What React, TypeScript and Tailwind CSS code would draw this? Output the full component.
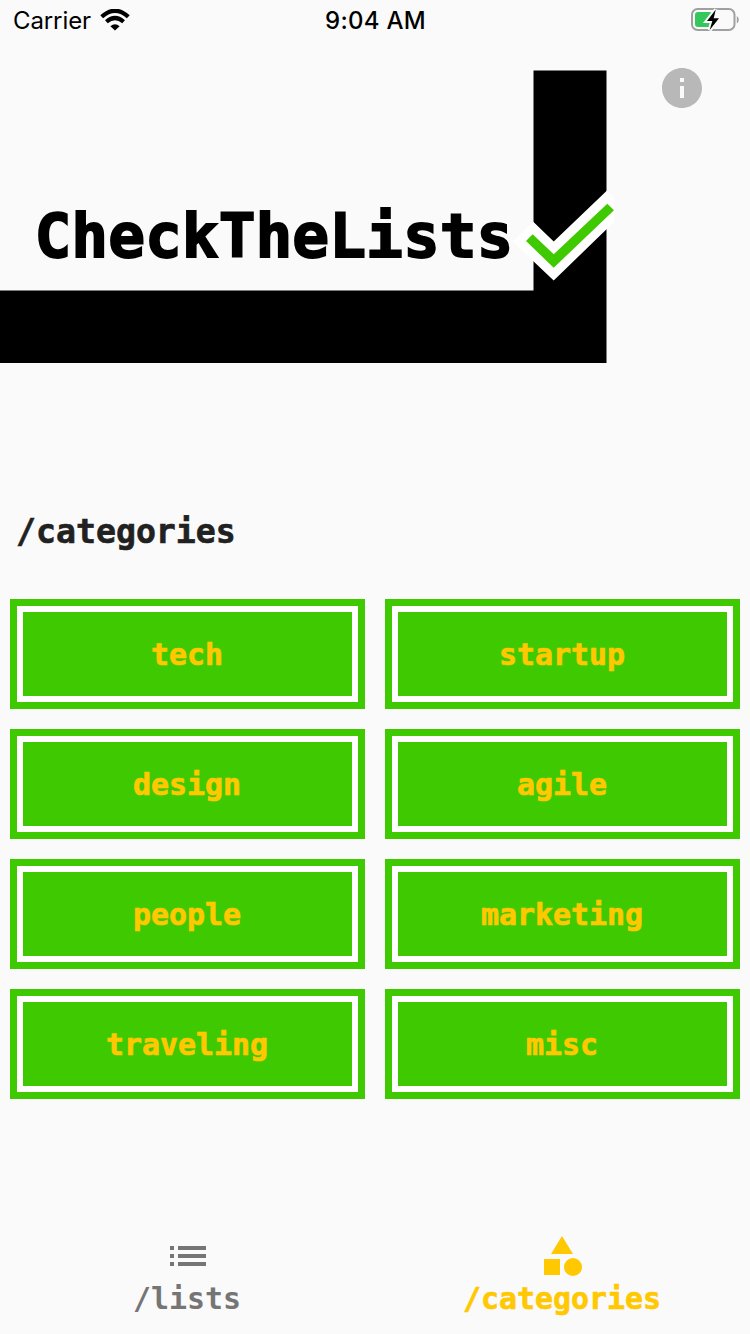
import { MdCategory, MdInfo, MdList } from "react-icons/md";

const categories = ["tech", "startup", "design", "agile", "people", "marketing", "traveling", "misc"];

function StatusBar() {
  return (
    <div className="grid h-10 grid-cols-3 items-center font-['Inter',sans-serif] text-black">
      <div className="flex items-center gap-[9px] pl-[13px]">
        <span className="pt-0.5 text-[24px] font-normal leading-[38px] tracking-[-0.1px]">Carrier</span>
        <svg width="30" height="22" viewBox="0 0 30 22" fill="none">
          <path d="M1.7 7.8Q15 -4.2 28.3 7.8" stroke="#000" strokeWidth="4.2" />
          <path d="M6.4 12.8Q15 5.2 23.6 12.8" stroke="#000" strokeWidth="4.1" />
          <path d="M10.4 17.2Q15 13.3 19.6 17.2L15 21.6Z" fill="#000" />
        </svg>
      </div>
      <div className="pl-px pt-0.5 text-center text-[24px] font-medium leading-[38px] tracking-[0.3px]">9:04 AM</div>
      <div className="flex justify-end pr-[10px]">
        <svg width="50" height="26" viewBox="0 0 50 26">
          <rect x="2" y="2.1" width="42.5" height="20.8" rx="5.5" fill="none" stroke="#a0a0a0" strokeWidth="2" />
          <path d="M46.8 9v7.4Q48.8 15.4 48.8 12.7T46.8 9Z" fill="#a0a0a0" />
          <rect x="5" y="5" width="17.5" height="15" rx="3" fill="#34c759" />
          <path d="M25.8 2.6L17 14h5.3l-2.6 9L29 11.3h-5.3z" fill="#000" stroke="#fafafa" strokeWidth="4" />
          <path d="M25.8 2.6L17 14h5.3l-2.6 9L29 11.3h-5.3z" fill="#000" />
        </svg>
      </div>
    </div>
  );
}

function Header() {
  return (
    <header className="relative flex h-[440px] justify-end pr-11 pt-6">
      <svg className="absolute left-0 top-0" width="640" height="340" viewBox="0 40 640 340">
        <path d="M533.5 70.5H606.5V363H0V290.5H533.5Z" fill="#000" />
        <path d="M533 221.5L553.7 241.5L607 190.5L614 197V222L553.7 280.5L512.5 241.5Z" fill="#fff" />
        <path d="M532.7 234.3L553.7 254.2L607.3 203.7L614 210.3L553.7 267.7L526 241Z" fill="#3ec900" />
      </svg>
      <h1 className="absolute left-[34.5px] top-[156px] whitespace-nowrap text-[61.2px] leading-[80px] text-black [-webkit-text-stroke:1.8px_#000]">
        CheckTheLists
      </h1>
      <button aria-label="Information" className="size-12">
        <MdInfo className="size-12 text-[#b8b8b8]" />
      </button>
    </header>
  );
}

export default function App() {
  return (
    <div className="flex h-[1334px] w-[750px] flex-col overflow-hidden bg-[#fafafa] font-['DejaVu_Sans_Mono',monospace] font-bold">
      <StatusBar />
      <Header />
      <main className="flex-1">
        <h2 className="h-[119px] pl-4 pt-[32px] text-[33.2px] leading-10 text-[#212121] [-webkit-text-stroke:0.6px_#212121]">
          /categories
        </h2>
        <div className="grid grid-cols-2 gap-5 px-[10px]">
          {categories.map((name) => (
            <button key={name} className="h-[110px] bg-[#3ec900] p-[7px]">
              <span className="flex h-full items-center justify-center border-[6px] border-white pr-px pt-px text-[29.9px] leading-10 text-[#ffc800] [-webkit-text-stroke:0.7px_#ffc800]">
                {name}
              </span>
            </button>
          ))}
        </div>
      </main>
      <nav className="grid h-[102px] grid-cols-2 text-[29.9px] leading-[38px]">
        <a className="flex flex-col items-center text-[#757575]">
          <MdList className="size-12" />
          <span className="pr-px">/lists</span>
        </a>
        <a className="flex flex-col items-center pr-px text-[#ffc800]">
          <MdCategory className="size-12" />
          <span className="[-webkit-text-stroke:0.6px_#ffc800]">/categories</span>
        </a>
      </nav>
    </div>
  );
}
